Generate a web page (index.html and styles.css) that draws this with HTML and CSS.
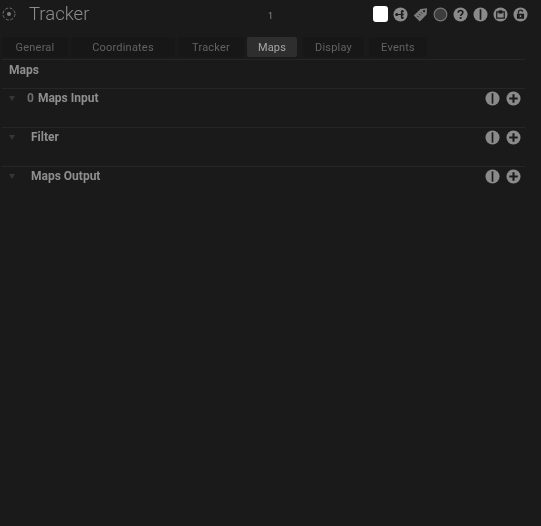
FILE: index.html
```html
<!DOCTYPE html>
<html lang="en">

<head>
    <meta charset="UTF-8">
    <meta name="viewport" content="width=device-width, initial-scale=1.0">
    <link rel="stylesheet" href="styles.css">
    <title>Tracker</title>
</head>

<body>
    <div class="panel">
        <!-- Header -->
        <div class="header">
            <svg class="logo" width="14" height="14" viewBox="0 0 14 14">
                <circle cx="7" cy="7" r="6" fill="none" stroke="#6e6e6e" stroke-width="1" stroke-dasharray="3 1.7"/>
                <circle cx="7" cy="7" r="2" fill="#7a7a7a"/>
            </svg>
            <span class="title">Tracker</span>
            <span class="count">1</span>
            <div class="tools">
                <span class="swatch"></span>
                <svg class="tool" viewBox="0 0 16 16">
                    <circle cx="8" cy="8" r="7.5" fill="#8a8a8a"/>
                    <path d="M4 8h5M9 4.5v7" stroke="#1a1a1a" stroke-width="1.2" fill="none"/>
                    <circle cx="4" cy="8" r="1.6" fill="#1a1a1a"/>
                    <circle cx="10" cy="4.5" r="1.4" fill="#1a1a1a"/>
                    <circle cx="10" cy="8" r="1.4" fill="#1a1a1a"/>
                    <circle cx="10" cy="11.5" r="1.4" fill="#1a1a1a"/>
                </svg>
                <svg class="tool" viewBox="0 0 16 16">
                    <path d="M.8 9 8 2l7-.8-.4 6.8-7.4 7.4z" fill="#7c7c7c"/>
                    <circle cx="11.8" cy="4.4" r="1.1" fill="#1a1a1a"/>
                    <path d="M4.6 9.4l1.6 1.6M6.6 7.4l1.6 1.6M8.6 5.8l1.2 1.2" stroke="#1a1a1a" stroke-width="1"/>
                </svg>
                <svg class="tool" viewBox="0 0 16 16">
                    <circle cx="8" cy="8" r="6.8" fill="#3d3d3d" stroke="#777" stroke-width="1.2"/>
                </svg>
                <svg class="tool" viewBox="0 0 16 16">
                    <circle cx="8" cy="8" r="7.5" fill="#8a8a8a"/>
                    <path d="M5.6 6.1C5.6 4.6 6.7 3.7 8 3.7s2.5.9 2.5 2.2c0 1.9-2.4 1.8-2.4 3.7" fill="none" stroke="#1a1a1a" stroke-width="1.7"/>
                    <rect x="7.1" y="10.7" width="2" height="2" fill="#1a1a1a"/>
                </svg>
                <svg class="tool" viewBox="0 0 16 16">
                    <circle cx="8" cy="8" r="7.5" fill="#8a8a8a"/>
                    <rect x="7.1" y="2.5" width="1.8" height="11" fill="#1a1a1a"/>
                </svg>
                <svg class="tool" viewBox="0 0 16 16">
                    <circle cx="8" cy="8" r="7.5" fill="#8a8a8a"/>
                    <path d="M4 5.2h8v6.6H4z" fill="none" stroke="#1a1a1a" stroke-width="1.3"/>
                    <rect x="6" y="3.5" width="4" height="3.5" fill="#1a1a1a"/>
                </svg>
                <svg class="tool" viewBox="0 0 16 16">
                    <circle cx="8" cy="8" r="7.5" fill="#8a8a8a"/>
                    <rect x="4.2" y="7.2" width="7.6" height="5.3" fill="#1a1a1a"/>
                    <path d="M5.8 7V5.4C5.8 4 6.8 3.3 8 3.3s2.2.7 2.2 1.7" fill="none" stroke="#1a1a1a" stroke-width="1.3"/>
                    <rect x="7.2" y="8.8" width="1.6" height="2" fill="#8a8a8a"/>
                </svg>
            </div>
        </div>

        <!-- Tabs -->
        <div class="tabs">
            <span class="tab tab-general">General</span>
            <span class="tab tab-coords">Coordinates</span>
            <span class="tab tab-tracker">Tracker</span>
            <span class="tab tab-maps active">Maps</span>
            <span class="tab tab-display">Display</span>
            <span class="tab tab-events">Events</span>
        </div>

        <h2 class="page-title">Maps</h2>

        <!-- Sections -->
        <div class="section">
            <span class="arrow"></span>
            <span class="section-count">0</span>
            <span class="section-name">Maps Input</span>
            <svg class="action" viewBox="0 0 16 16">
                <circle cx="8" cy="8" r="7.5" fill="#8a8a8a"/>
                <rect x="7.1" y="2.5" width="1.8" height="11" fill="#1a1a1a"/>
            </svg>
            <svg class="action" viewBox="0 0 16 16">
                <circle cx="8" cy="8" r="7.5" fill="#8a8a8a"/>
                <path d="M3.5 8h9M8 3.5v9" stroke="#1a1a1a" stroke-width="2.2"/>
            </svg>
        </div>
        <div class="section">
            <span class="arrow"></span>
            <span class="section-name indent">Filter</span>
            <svg class="action" viewBox="0 0 16 16">
                <circle cx="8" cy="8" r="7.5" fill="#8a8a8a"/>
                <rect x="7.1" y="2.5" width="1.8" height="11" fill="#1a1a1a"/>
            </svg>
            <svg class="action" viewBox="0 0 16 16">
                <circle cx="8" cy="8" r="7.5" fill="#8a8a8a"/>
                <path d="M3.5 8h9M8 3.5v9" stroke="#1a1a1a" stroke-width="2.2"/>
            </svg>
        </div>
        <div class="section">
            <span class="arrow"></span>
            <span class="section-name indent">Maps Output</span>
            <svg class="action" viewBox="0 0 16 16">
                <circle cx="8" cy="8" r="7.5" fill="#8a8a8a"/>
                <rect x="7.1" y="2.5" width="1.8" height="11" fill="#1a1a1a"/>
            </svg>
            <svg class="action" viewBox="0 0 16 16">
                <circle cx="8" cy="8" r="7.5" fill="#8a8a8a"/>
                <path d="M3.5 8h9M8 3.5v9" stroke="#1a1a1a" stroke-width="2.2"/>
            </svg>
        </div>
    </div>
</body>

</html>
```

FILE: styles.css
```css
/* General */
html,
body {
    height: 100%;
}

body {
    font-family: Roboto, 'Liberation Sans', sans-serif;
    background-color: #1a1a1a;
    color: #8a8a8a;
    margin: 0;
    overflow: hidden;
}

.panel {
    padding: 0 16px 0 2px;
    will-change: transform;
}

/* Header */
.header {
    display: flex;
    align-items: center;
    height: 28px;
}

.logo {
    flex: none;
}

.title {
    margin-left: 13px;
    font-size: 18.5px;
    font-weight: 300;
    color: #8c8c8c;
    width: 239px;
}

.count {
    font-size: 9px;
    color: #8a8a8a;
    margin-top: 4px;
}

.tools {
    display: flex;
    align-items: center;
    margin-left: auto;
    margin-right: -3px;
    gap: 5px;
}

.tool {
    width: 15px;
    height: 15px;
}

.swatch {
    width: 15px;
    height: 16px;
    background: #fff;
    border-radius: 3px;
}

/* Tabs */
.tabs {
    display: flex;
    height: 22px;
    margin-top: 9px;
    border-bottom: 1px solid #262626;
    box-sizing: content-box;
    font-size: 11px;
}

.tab {
    display: flex;
    align-items: center;
    justify-content: center;
    height: 20px;
    background: #171717;
    color: #626262;
    border-radius: 2px;
    letter-spacing: 0.2px;
}

.tab-general {
    width: 66px;
    margin-right: 3px;
}

.tab-coords {
    width: 104px;
    margin-right: 3px;
}

.tab-tracker {
    width: 66px;
    margin-right: 3px;
}

.tab-maps {
    width: 50px;
    margin-right: 6px;
}

.tab-display {
    width: 61px;
    margin-right: 5px;
}

.tab-events {
    width: 58px;
}

.tab.active {
    background: #2e2e2e;
    color: #a8a8a8;
}

.page-title {
    margin: 0;
    padding: 3px 0 0 7px;
    height: 25px;
    box-sizing: content-box;
    font-size: 12px;
    line-height: 15px;
    font-weight: 700;
    color: #8f8f8f;
}

/* Sections */
.section {
    display: flex;
    align-items: flex-start;
    height: 38px;
    border-top: 1px solid #262626;
    padding-right: 4px;
    font-size: 12px;
    font-weight: 700;
    line-height: 19px;
}

.arrow {
    width: 0;
    height: 0;
    margin: 7px 0 0 7px;
    border-left: 3px solid transparent;
    border-right: 3px solid transparent;
    border-top: 5px solid #363636;
}

.section-count {
    margin-left: 12px;
    color: #6f6f6f;
}

.section-name {
    margin-left: 4px;
    color: #8f8f8f;
    flex: 1;
}

.section-name.indent {
    margin-left: 16px;
}

.action {
    width: 15px;
    height: 15px;
    margin: 2px 0 0 6px;
}
```
